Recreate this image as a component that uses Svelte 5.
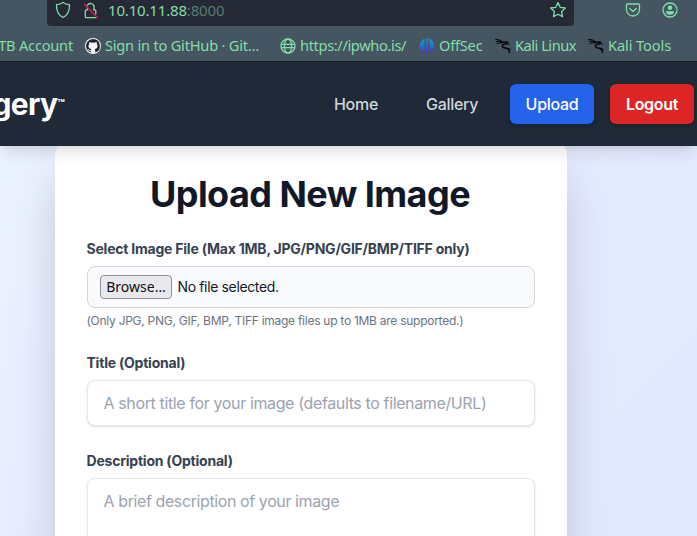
<script>
  const bookmarks = [
    { icon: '', label: 'HTB Account', x: -11, w: 84 },
    { icon: 'github', label: 'Sign in to GitHub · Git…', x: 85, w: 174 },
    { icon: 'globe', label: 'https://ipwho.is/', x: 280, w: 127 },
    { icon: 'offsec', label: 'OffSec', x: 419, w: 64 },
    { icon: 'kali', label: 'Kali Linux', x: 495, w: 82 },
    { icon: 'kali', label: 'Kali Tools', x: 588, w: 84 }
  ].map((b, i, all) => ({ ...b, gap: i ? b.x - all[i - 1].x - all[i - 1].w : b.x }));
</script>

<div class="window">
  <header class="chrome">
    <div class="toolbar">
      <div class="address">
        <svg class="shield" width="16" height="18" viewBox="0 0 16 18"><path d="M8 1.400C6.300 3 4 3.600 1.500 3.600C1.200 9.500 3.200 14 8 16.500C12.800 14 14.800 9.500 14.500 3.600C12 3.600 9.700 3 8 1.400Z" /></svg>
        <svg class="lock" width="16" height="18" viewBox="0 0 16 18"><path d="M4.500 4.200a3.500 3.200 0 0 1 6.500.8v3.500M4.500 6.500v2.300H3.300q-1 0-1 1V15.700q0 1 1 1h9.200M10.500 8.800h1.300q1 0 1 1v3" /><path class="slash" d="M1.500 3.500 14.500 16.700" /></svg>
        <span class="url">10.10.11.88<i>:8000</i></span>
        <svg class="star" width="18" height="18" viewBox="0 0 18 18"><path d="m9 1.600 2.200 4.700 5.100.7-3.700 3.600.9 5.200L9 13.300l-4.500 2.500.9-5.200L1.700 7l5.100-.7Z" /></svg>
      </div>
      <svg class="pocket" width="16" height="16" viewBox="0 0 16 16"><path d="M2.500 2h11q1 0 1 1v4.500a6.500 6.500 0 0 1-13 0V3q0-1 1-1Z" /><path d="m4.700 6.500 3.300 3 3.300-3" /></svg>
      <svg class="account" width="16" height="16" viewBox="0 0 16 16"><circle cx="8" cy="8" r="7" /><circle class="solid" cx="8" cy="5.800" r="2.300" /><path class="solid" d="M3.800 9.200h8.400q-.4 3.500-4.200 3.500T3.800 9.200Z" /></svg>
    </div>
    <nav class="bookmarks">
      {#each bookmarks as b}
        <div class="bookmark" style="width:{b.w}px;margin-left:{b.gap}px">
          {#if b.icon === 'github'}
            <svg width="16" height="16" viewBox="0 0 16 16"><circle cx="8" cy="8" r="8" fill="#f5f5f7" /><path fill="#20232c" d="M8 1a7 7 0 0 0-2.300 13.600v-1.800c-1.900.4-2.300-.7-2.700-1.300-.2-.3-.7-.6-.3-.7 1-.2 1.400 1.300 2.200 1.400.5.100.8 0 1-.2 0-.5.300-.8.500-1C4.300 10.800 3.400 9.600 3.400 8c0-.8.300-1.500.8-2-.1-.6-.1-1.300.2-2 .8 0 1.500.5 2 .8a7 7 0 0 1 3.200 0c.6-.4 1.300-.8 2-.8.300.8.300 1.500.2 2 .5.500.8 1.200.8 2 0 1.600-1 2.800-3 3 .4.300.6.800.6 1.500v2.100A7 7 0 0 0 8 1Z" /></svg>
          {:else if b.icon === 'globe'}
            <svg class="globe" width="16" height="16" viewBox="0 0 16 16"><circle cx="8" cy="8" r="7" /><ellipse cx="8" cy="8" rx="3.600" ry="7" /><path d="M1.400 6.300h13.200M1.400 9.700h13.200" /></svg>
          {:else if b.icon === 'offsec'}
            <svg width="16" height="16" viewBox="0 0 16 16"><defs><linearGradient id="off" x1="0" y1="0" x2="0" y2="16" gradientUnits="userSpaceOnUse"><stop offset="0" stop-color="#0fa8bd" /><stop offset=".55" stop-color="#2869cf" /><stop offset="1" stop-color="#6320d6" /></linearGradient></defs><path fill="url(#off)" d="M5.600.8C2.600 2 .7 4.400.7 7.800s1.900 5.500 4.900 7ZM7.200.3h1.600v15.400H7.200ZM10.400.8v14c3-1.500 4.900-3.600 4.900-7S13.400 2 10.400.8Z" /></svg>
          {:else if b.icon === 'kali'}
            <svg class="kali" width="16" height="16" viewBox="0 0 17 16"><path d="M.3.8C4 .8 6.500 2 8.500 3.800M.8 3.300C3 2.600 6 3 8 4.300M1.800 5.600C3.500 4.300 5.500 4.200 7.500 4.800" /><path class="body" d="M7.500 4.200c2-.7 4.500-.5 6 .8M13 5.900c-2-.3-4-.3-4.900 1-1.200 2 .9 3 2.900 3.200 2.800.3 4.300 1.600 4.500 5.300" /><path d="m11.500 4.300 1.400-1 .7 1.700 1.800 1.500M13 10.500l3.500 1.300" /></svg>
          {/if}
          <span>{b.label}</span>
        </div>
      {/each}
    </nav>
  </header>

  <div class="sitebar">
    <div class="brand">Imagery<sup>™</sup></div>
    <nav class="links">
      <a class="home" href="#home">Home</a>
      <a class="gallery" href="#gallery">Gallery</a>
      <a class="button blue" href="#upload">Upload</a>
      <a class="button red" href="#logout">Logout</a>
    </nav>
  </div>

  <main>
    <form class="card">
      <h1>Upload New Image</h1>
      <div class="label first">Select Image File (Max 1MB, JPG/PNG/GIF/BMP/TIFF only)</div>
      <div class="file"><button type="button">Browse…</button><span>No file selected.</span></div>
      <p>(Only JPG, PNG, GIF, BMP, TIFF image files up to 1MB are supported.)</p>
      <label class="label title" for="title">Title (Optional)</label>
      <input id="title" placeholder="A short title for your image (defaults to filename/URL)" />
      <label class="label desc" for="description">Description (Optional)</label>
      <textarea id="description" placeholder="A brief description of your image"></textarea>
    </form>
  </main>
</div>

<style>
  * { box-sizing: border-box; }
  .window { width: 697px; height: 536px; overflow: hidden; display: flex; flex-direction: column; font-family: Inter, sans-serif; }
  .chrome { height: 62px; flex: none; background: #455561; border-bottom: 1px solid #15202c; font-family: "Noto Sans", sans-serif; color: #81dfa6; }
  .toolbar { height: 26px; display: flex; align-items: flex-start; }
  svg { flex: none; fill: none; }
  .toolbar svg, .globe { stroke: #81dfa6; stroke-width: 1.3; stroke-linejoin: round; stroke-linecap: round; }
  .toolbar .slash { stroke: #e01c48; stroke-width: 1.4; }
  .toolbar svg .solid { fill: #81dfa6; stroke: none; }
  .address { width: 527px; height: 26px; margin-left: 47px; background: #252a36; border-radius: 0 0 4px 4px; display: flex; align-items: flex-start; }
  .shield { margin: 1px 0 0 8px; }
  .lock { margin: 1px 0 0 12px; }
  .url { margin-left: 9px; font-size: 15px; letter-spacing: -.17px; line-height: 21px; white-space: nowrap; }
  .url i { font-style: normal; color: #557c70; }
  .star { margin: 1px 7px 0 auto; }
  .pocket { margin: 2px 0 0 51px; }
  .account { margin: 2px 0 0 21px; }
  .bookmarks { display: flex; height: 35px; align-items: center; padding-top: 4px; }
  .bookmark { flex: none; display: flex; align-items: center; gap: 4px; font-size: 14.67px; letter-spacing: -.24px; line-height: 20px; white-space: nowrap; }
  .bookmark span { height: 20px; line-height: 18px; }
  .bookmark:first-child { justify-content: flex-end; }
  .bookmark:nth-child(3) { letter-spacing: -.38px; }
  .bookmark:nth-child(5) { letter-spacing: -.5px; }
  .bookmark:nth-child(6) { letter-spacing: -.12px; }
  .kali { stroke: #06090c; stroke-width: 1.1; }
  .kali .body { stroke-width: 1.6; }
  .sitebar { height: 84px; flex: none; background: #1f2937; display: flex; align-items: center; justify-content: space-between; padding-right: 3px; position: relative; box-shadow: 0 10px 15px -3px #0000001a, 0 4px 6px -4px #0000001a; z-index: 1; }
  .brand { width: 65px; display: flex; justify-content: flex-end; font-size: 30px; line-height: 36px; font-weight: 700; letter-spacing: -.7px; color: #fff; }
  .brand sup { font-size: 12px; line-height: 12px; margin: 12px 0 0 0; letter-spacing: 0; }
  .links { display: flex; align-items: center; font-size: 16px; line-height: 24px; font-weight: 500; letter-spacing: -.3px; }
  .links a { text-decoration: none; color: #d1d5db; }
  .home { width: 92px; }
  .gallery { width: 84px; }
  .links .button { width: 84px; height: 40px; border-radius: 6px; text-align: center; line-height: 40px; color: #fff; box-shadow: 0 4px 6px -1px #0000001a, 0 2px 4px -2px #0000001a; }
  .blue { background: #2563eb; }
  .links .red { background: #dc2626; margin-left: 16px; font-weight: 600; }
  main { flex: 1; min-height: 0; overflow: hidden; background: linear-gradient(135deg, #ebf2ff, #e5ebff 60%, #e1e9ff); padding-left: 55px; }
  .card { width: 512px; height: 560px; margin-top: -4px; padding: 32px; border-radius: 12px; background: #fff; box-shadow: 0 25px 50px -12px #00000040; display: flex; flex-direction: column; }
  h1 { margin: 0 1px 0 -1px; text-align: center; font-size: 36px; line-height: 40px; font-weight: 700; color: #111827; letter-spacing: -.55px; white-space: nowrap; }
  .label { margin-left: -.5px; font-size: 14px; line-height: 20px; font-weight: 700; color: #374151; letter-spacing: -.22px; white-space: nowrap; }
  .first { margin-top: 25px; }
  .file { height: 42px; margin-top: 7px; border: 1px solid #d1d5db; border-radius: 8px; background: #f9fafb; display: flex; align-items: center; padding-left: 12px; font-size: 14px; letter-spacing: -.36px; color: #111827; }
  .file span { margin-top: -1px; }
  .file button { width: 72px; height: 24px; padding: 0; border: 1px solid #8f8f9d; border-radius: 4px; background: #e9e9ed; font: 14px/20px "Noto Sans", sans-serif; letter-spacing: 0; color: #111; margin-right: 5.5px; }
  p { margin: 5px 0 0 -.5px; font-size: 12px; line-height: 16px; letter-spacing: -.265px; color: #6b7280; white-space: nowrap; }
  .title { margin-top: 24px; }
  input, textarea { display: block; width: 448px; border: 1px solid #e5e7eb; border-radius: 8px; background: #fff; padding: 0 15.5px; font: 16px/24px Inter, sans-serif; letter-spacing: -.37px; box-shadow: 0 1px 3px #0000001a, 0 1px 2px -1px #0000001a; outline: 0; resize: none; }
  input { height: 46px; margin-top: 7px; }
  textarea { height: 100px; margin-top: 7px; padding-top: 10px; overflow: hidden; letter-spacing: -.4px; }
  input::placeholder, textarea::placeholder { color: #9ca3af; opacity: 1; }
  .desc { margin-top: 25px; }
</style>
